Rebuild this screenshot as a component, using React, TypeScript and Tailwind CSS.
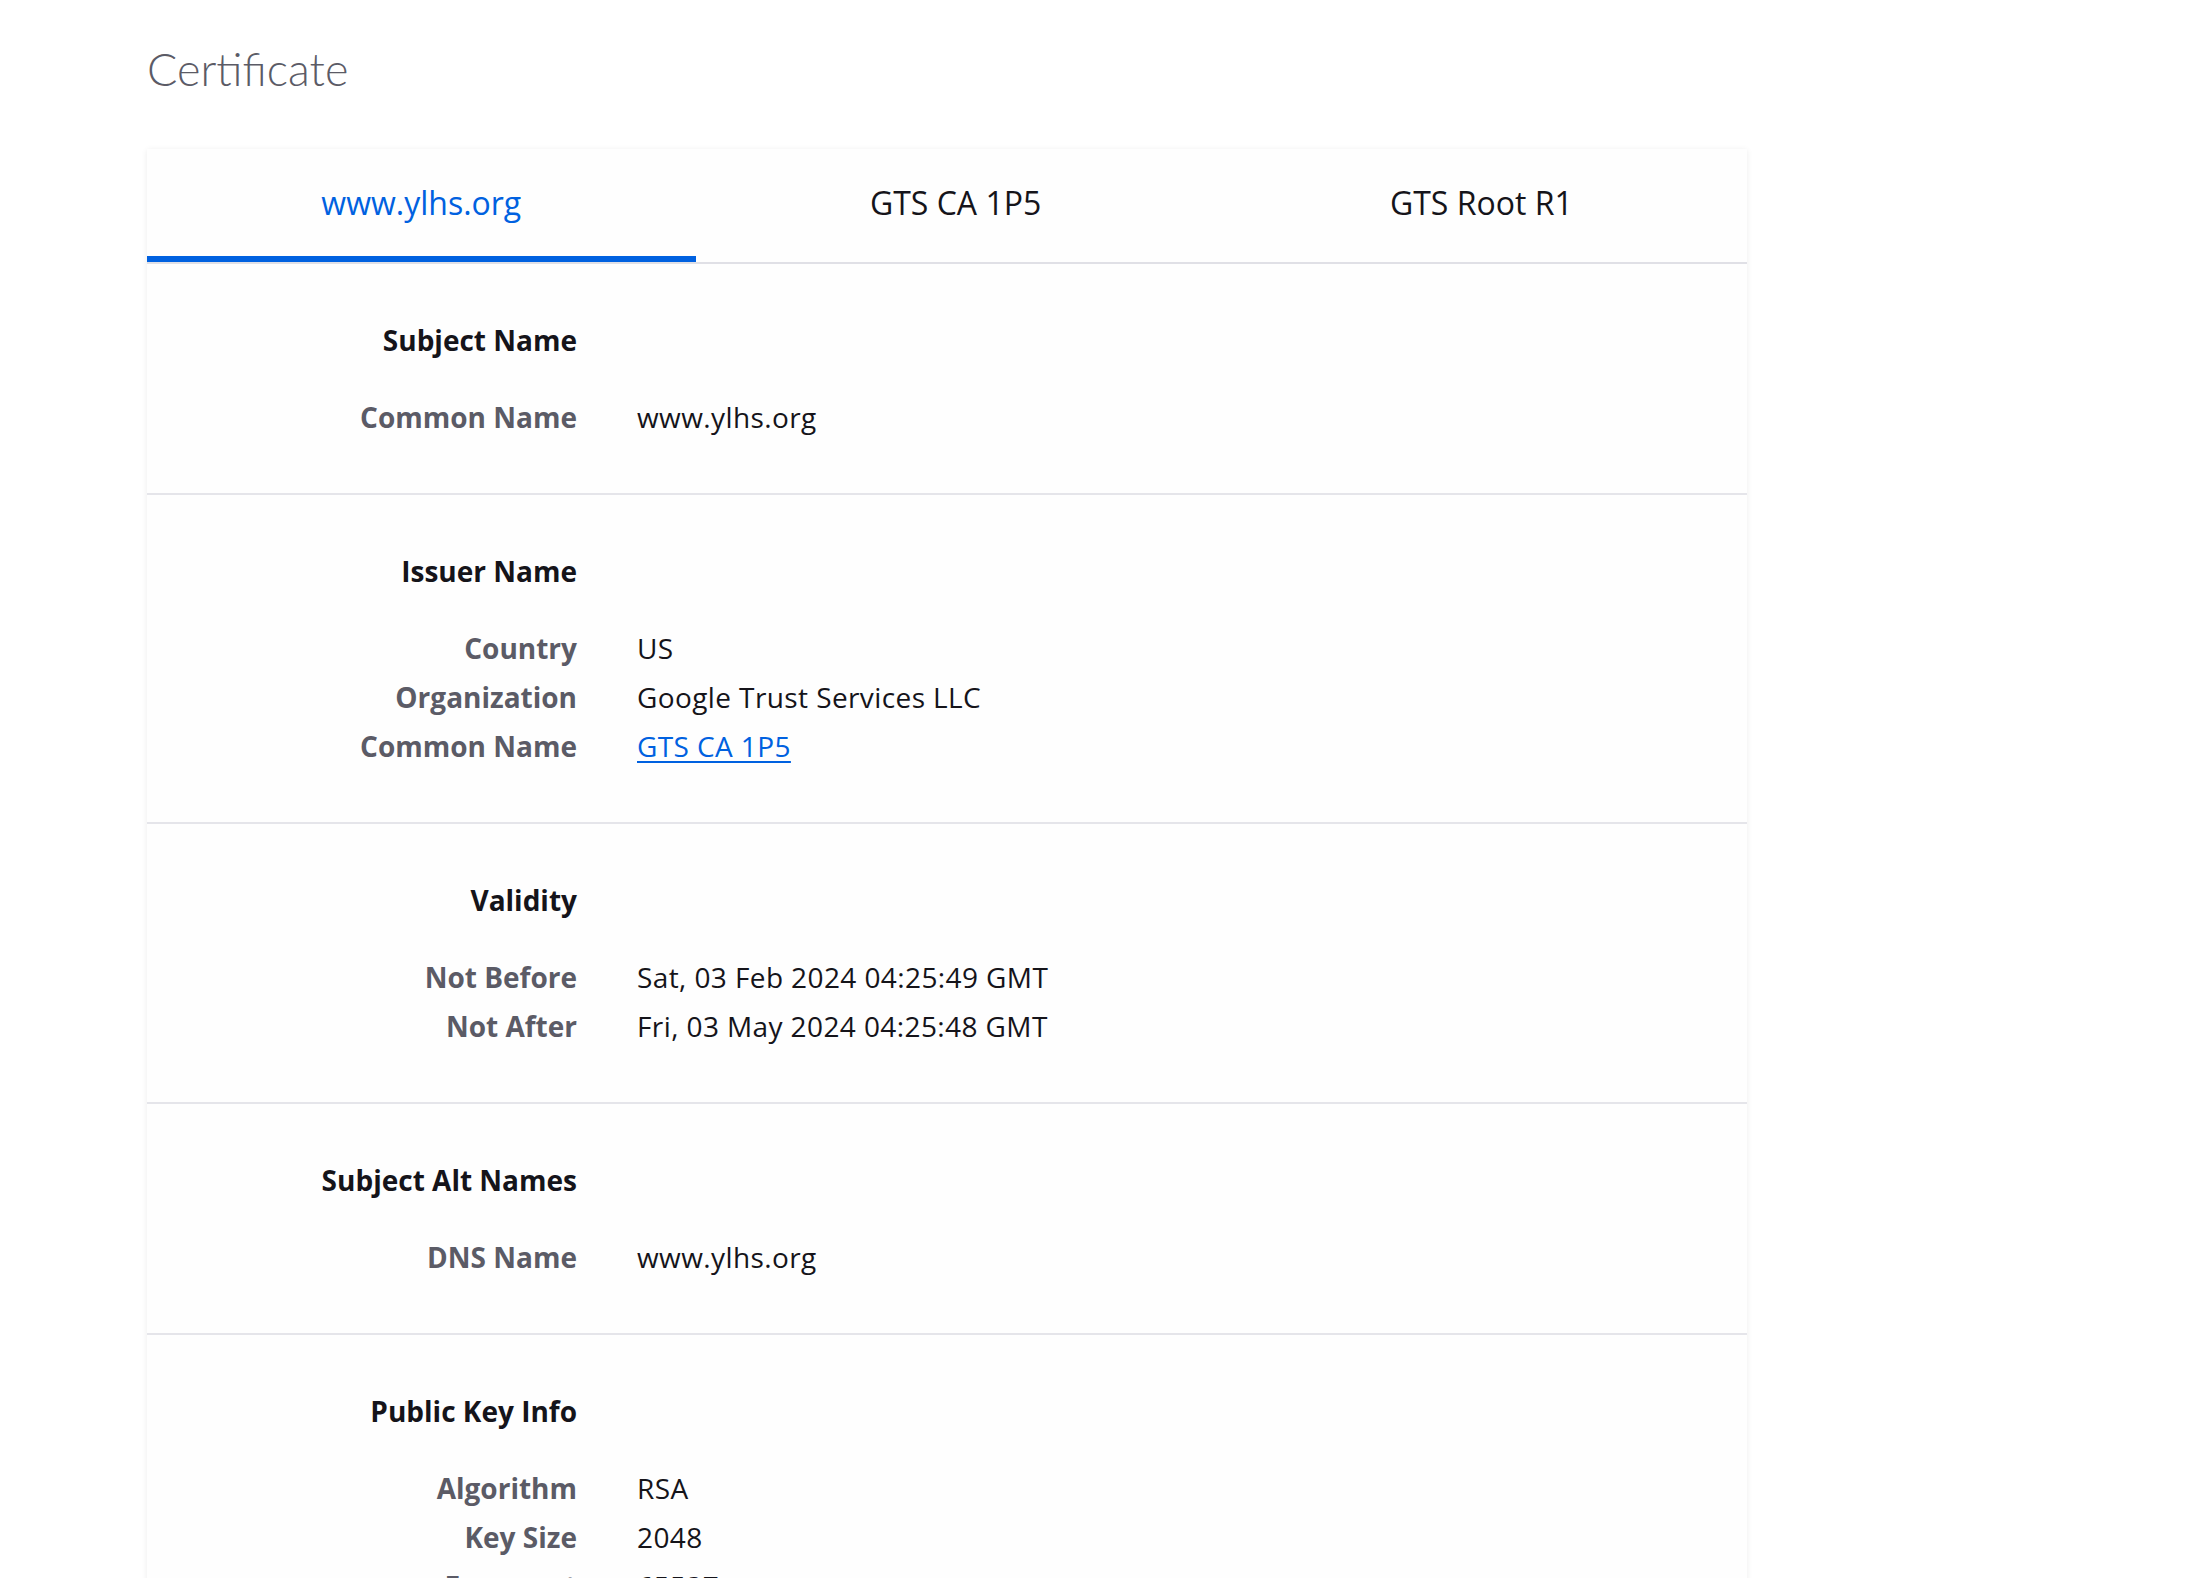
import React from 'react';

type Row = { label: string; value: string; link?: boolean };
type Section = { title: string; rows: Row[] };

const tabs = ['www.ylhs.org', 'GTS CA 1P5', 'GTS Root R1'];

const sections: Section[] = [
    { title: 'Subject Name', rows: [{ label: 'Common Name', value: 'www.ylhs.org' }] },
    {
        title: 'Issuer Name',
        rows: [
            { label: 'Country', value: 'US' },
            { label: 'Organization', value: 'Google Trust Services LLC' },
            { label: 'Common Name', value: 'GTS CA 1P5', link: true }
        ]
    },
    {
        title: 'Validity',
        rows: [
            { label: 'Not Before', value: 'Sat, 03 Feb 2024 04:25:49 GMT' },
            { label: 'Not After', value: 'Fri, 03 May 2024 04:25:48 GMT' }
        ]
    },
    { title: 'Subject Alt Names', rows: [{ label: 'DNS Name', value: 'www.ylhs.org' }] },
    {
        title: 'Public Key Info',
        rows: [
            { label: 'Algorithm', value: 'RSA' },
            { label: 'Key Size', value: '2048' },
            { label: 'Exponent', value: '65537' },
            { label: 'Modulus', value: 'C4:6B:2A:91:0E:7F:...' }
        ]
    }
];

function InfoSection({ section }: { section: Section }) {
    return (
        <div className="grid grid-cols-[430px_1fr] gap-x-[60px] border-b-2 border-[#e5e5ea] pt-[52px] pb-[51px]">
            {/* Titre de la section */}
            <div className="text-right font-bold text-[#15141a] leading-[49px] mb-[28px]">{section.title}</div>
            <div />
            {section.rows.map((row, i) => (
                <React.Fragment key={i}>
                    <div className="text-right font-bold text-[#5b5b66] leading-[49px]">{row.label}</div>
                    <div className="leading-[49px] text-[#15141a] tracking-[0.4px]">
                        {row.link ? (
                            <a href="#" className="text-[#0061e0] underline underline-offset-4">{row.value}</a>
                        ) : (
                            row.value
                        )}
                    </div>
                </React.Fragment>
            ))}
        </div>
    );
}

export default function App() {
    return (
        <div className="min-h-screen bg-white text-[28px]" style={{ fontFamily: '"Open Sans", "Noto Sans", sans-serif' }}>
            <div className="pl-[147px] pt-[44px] w-[1747px]">
                <h1
                    className="text-[45px] font-light text-[#5b5b66] leading-[50px] mb-[55px]"
                    style={{ fontFamily: 'Lato, sans-serif' }}
                >
                    Certificate
                </h1>

                <div className="bg-[#fefefe] shadow-[0_1px_6px_rgba(0,0,0,0.08)]">
                    {/* Onglets */}
                    <div className="flex border-b-2 border-[#e0e0e6]">
                        {tabs.map((tab, i) => (
                            <div
                                key={tab}
                                className={
                                    i === 0
                                        ? 'flex-auto h-[113px] flex items-center justify-center border-b-[6px] border-[#0061e0] text-[#0061e0] text-[32px] px-4'
                                        : 'flex-auto h-[113px] flex items-center justify-center border-b-[6px] border-transparent text-[#15141a] text-[32px] px-4'
                                }
                            >
                                {tab}
                            </div>
                        ))}
                    </div>

                    {sections.map((s) => (
                        <InfoSection key={s.title} section={s} />
                    ))}
                </div>
            </div>
        </div>
    );
}
